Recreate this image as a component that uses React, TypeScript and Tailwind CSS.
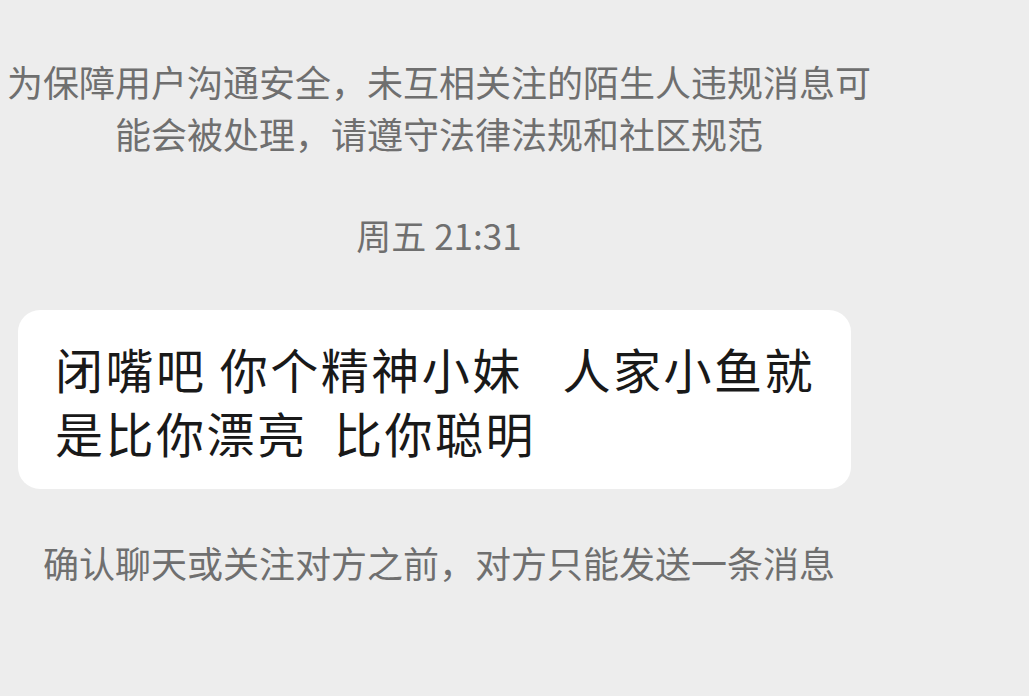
export default function App() {
  return (
    <div
      className="w-[1029px] h-[696px] overflow-hidden bg-[#ededed]"
      style={{ fontFamily: '"Noto Sans CJK SC", "Noto Sans", sans-serif' }}
    >
      <div className="w-[878px] flex flex-col items-center">
        {/* system notice */}
        <p className="mt-[55px] text-center text-[36px] leading-[52px] text-[#6f6f6f]">
          为保障用户沟通安全，未互相关注的陌生人违规消息可
          <br />
          能会被处理，请遵守法律法规和社区规范
        </p>

        {/* timestamp */}
        <div className="mt-[56px] text-[35px] leading-[40px] text-[#6f6f6f]">周五 21:31</div>

        {/* incoming message */}
        <div className="self-start ml-[18px] mt-[55px] w-[833px] h-[179px] rounded-[22px] bg-white pl-[37px] pt-[26px] text-[48px] leading-[64px] tracking-[2.5px] text-[#191919] whitespace-pre">
          <div>闭嘴吧 你个精神小妹   人家小鱼就</div>
          <div>是比你漂亮  比你聪明</div>
        </div>

        <p className="mt-[47px] text-center text-[36px] leading-[52px] text-[#6f6f6f]">
          确认聊天或关注对方之前，对方只能发送一条消息
        </p>
      </div>
    </div>
  )
}
